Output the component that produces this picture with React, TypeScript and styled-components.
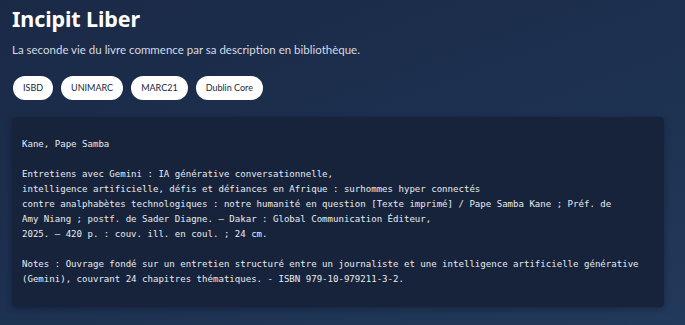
import React from "react";
import styled, { createGlobalStyle } from "styled-components";

const Global = createGlobalStyle`
  html, body { margin: 0; padding: 0; }
  body {
    width: 685px;
    height: 325px;
    overflow: hidden;
    background: linear-gradient(160deg, #1a2946 0%, #1d3150 55%, #223a5b 100%);
    font-family: "Noto Sans", "Open Sans", sans-serif;
    color: #ffffff;
  }
`;

const Page = styled.main`
  display: flex;
  flex-direction: column;
  padding: 4px 21px 0 12px;
`;

const Title = styled.h1`
  margin: 0;
  font-size: 21.5px;
  line-height: 30px;
  font-weight: 700;
  color: #ffffff;
  letter-spacing: -0.1px;
`;

const Subtitle = styled.p`
  margin: 8px 0 0;
  font-family: Lato, "Noto Sans", sans-serif;
  font-size: 11.5px;
  line-height: 16px;
  color: #d5dbe5;
`;

const Tags = styled.div`
  display: flex;
  gap: 8px;
  margin-top: 18px;
  padding-left: 1px;
`;

const Tag = styled.button`
  height: 24px;
  padding: 0 10px;
  border: none;
  border-radius: 12px;
  background: #ffffff;
  color: #1c2638;
  font-family: Lato, "Noto Sans", sans-serif;
  font-size: 9px;
  line-height: 24px;
  cursor: pointer;
`;

const Card = styled.section`
  margin-top: 17px;
  padding: 20px 10px;
  background: #16233a;
  border-radius: 4px;
  box-shadow: 0 2px 6px rgba(5, 12, 25, 0.35);
`;

const Record = styled.pre`
  margin: 0;
  font-family: "DejaVu Sans Mono", "Liberation Mono", monospace;
  font-size: 9.07px;
  line-height: 15px;
  color: #e8ecf2;
  white-space: pre-wrap;
`;

const record = `Kane, Pape Samba

Entretiens avec Gemini : IA générative conversationnelle,
intelligence artificielle, défis et défiances en Afrique : surhommes hyper connectés
contre analphabètes technologiques : notre humanité en question [Texte imprimé] / Pape Samba Kane ; Préf. de
Amy Niang ; postf. de Sader Diagne. – Dakar : Global Communication Éditeur,
2025. – 420 p. : couv. ill. en coul. ; 24 cm.

Notes : Ouvrage fondé sur un entretien structuré entre un journaliste et une intelligence artificielle générative
(Gemini), couvrant 24 chapitres thématiques. - ISBN 979-10-979211-3-2.`;

const formats = ["ISBD", "UNIMARC", "MARC21", "Dublin Core"];

export default function App() {
  return (
    <>
      <Global />
      <Page>
        <Title>Incipit Liber</Title>
        <Subtitle>La seconde vie du livre commence par sa description en bibliothèque.</Subtitle>
        <Tags>
          {formats.map((f) => (
            <Tag key={f}>{f}</Tag>
          ))}
        </Tags>
        <Card>
          <Record>{record}</Record>
        </Card>
      </Page>
    </>
  );
}
